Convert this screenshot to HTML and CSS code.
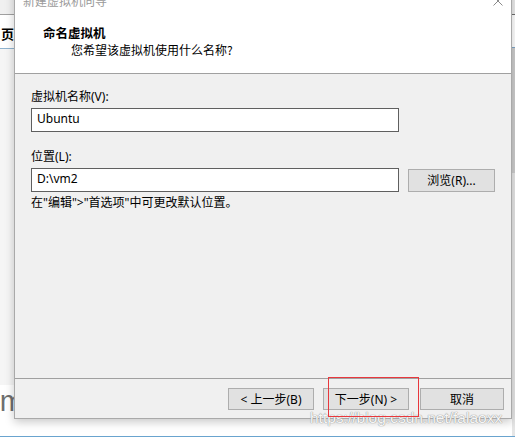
FILE: index.html
```html
<!DOCTYPE html>
<html lang="zh-CN">
<head>
<meta charset="utf-8">
<title>新建虚拟机向导</title>
<link rel="stylesheet" href="styles.css">
</head>
<body>
<div class="screen">
  <div class="desk">
    <div class="side-left">
      <div class="sl-top"></div>
      <div class="sl-tab">页</div>
      <div class="sl-mid"></div>
      <div class="sl-bottom"><span class="sl-m">m</span></div>
    </div>
    <div class="dialog">
      <div class="titlebar">
        <span class="title">新建虚拟机向导</span>
        <svg class="close" width="10" height="10" viewBox="0 0 10 10"><path d="M0.5 0.5L9.5 9.5M9.5 0.5L0.5 9.5"/></svg>
      </div>
      <div class="header">
        <div class="h-title">命名虚拟机</div>
        <div class="h-sub">您希望该虚拟机使用什么名称?</div>
      </div>
      <div class="body">
        <div class="label">虚拟机名称(V):</div>
        <div class="row"><div class="input">Ubuntu</div></div>
        <div class="label label-gap">位置(L):</div>
        <div class="row"><div class="input">D:\vm2</div><div class="btn browse">浏览(R)...</div></div>
        <div class="note">在"编辑"&gt;"首选项"中可更改默认位置。</div>
      </div>
      <div class="footer">
        <div class="btn back">&lt; 上一步(B)</div>
        <div class="btn next">下一步(N) &gt;</div>
        <div class="btn cancel">取消</div>
      </div>
    </div>
    <div class="side-right">
      <div class="sr-top"></div>
      <div class="sr-mid"></div>
      <div class="sr-low"></div>
    </div>
  </div>
  <div class="blue-line"></div>
  <div class="watermark">https://blog.csdn.net/falaoxx</div>
  <div class="highlight"></div>
</div>
</body>
</html>
```

FILE: styles.css
```css
* { box-sizing: border-box; }

html, body {
  margin: 0;
  padding: 0;
  background: #ffffff;
}

body {
  font-family: "Noto Sans", "Noto Sans CJK SC", sans-serif;
  font-size: 12px;
  color: #000;
}

.screen {
  position: relative;
  width: 515px;
  height: 437px;
  overflow: hidden;
  background: #ffffff;
}

.desk {
  display: flex;
  align-items: flex-start;
  height: 436px;
}

/* background window fragments */
.side-left {
  width: 14px;
  height: 436px;
  display: flex;
  flex-direction: column;
  flex-shrink: 0;
}
.sl-top {
  height: 15px;
  background: #f0f0f0;
  border-bottom: 1px solid #a0a0a0;
}
.sl-tab {
  height: 34px;
  background: #ffffff;
  border-bottom: 1px solid #8fb3cf;
  font-family: "Noto Sans CJK SC", sans-serif;
  font-weight: bold;
  font-size: 13px;
  line-height: 16px;
  padding: 11px 0 0 1px;
  overflow: hidden;
}
.sl-mid {
  height: 336px;
  background: #f5f5f5;
}
.sl-bottom {
  flex: 1;
  background: #ffffff;
  overflow: hidden;
  display: flex;
  justify-content: flex-end;
}
.sl-m {
  font-family: "Liberation Sans", sans-serif;
  font-size: 29px;
  line-height: 30px;
  color: #6e6e6e;
  margin-right: -10px;
  margin-top: 1px;
}

.side-right {
  width: 3px;
  height: 436px;
  display: flex;
  flex-direction: column;
  flex-shrink: 0;
}
.sr-top {
  height: 15px;
  background: #ececec;
  border-bottom: 1px solid #6d6d6d;
}
.sr-mid {
  height: 126px;
  background: #cdcdcd;
  border-top: 1px solid #7fa6c7;
  margin-top: 32px;
}
.sr-low {
  flex: 1;
  background: #e6e6e6;
}

/* dialog */
.dialog {
  width: 498px;
  height: 433px;
  margin-top: -14px;
  flex-shrink: 0;
  display: flex;
  flex-direction: column;
  background: #f0f0f0;
  border: 1px solid #a9a9a9;
  box-shadow: 0 3px 9px rgba(0, 0, 0, 0.22);
  position: relative;
  z-index: 1;
}

.titlebar {
  height: 28px;
  background: #ffffff;
  display: flex;
  align-items: center;
  justify-content: space-between;
  padding: 0 8px 0 8px;
}
.title {
  font-family: "Noto Sans CJK SC", sans-serif;
  font-size: 12px;
  line-height: 16px;
  color: #9a9a9a;
}
.close {
  display: block;
  margin-top: -1px;
}
.close path {
  stroke: #8a8a8a;
  stroke-width: 1;
  fill: none;
}

.header {
  background: #ffffff;
  border-bottom: 1px solid #a0a0a0;
  padding: 10px 0 15px 28px;
}
.h-title {
  font-family: "Noto Sans CJK SC", sans-serif;
  font-weight: bold;
  font-size: 12.5px;
  line-height: 16px;
}
.h-sub {
  font-family: "Noto Sans CJK SC", sans-serif;
  line-height: 16px;
  margin-top: 1px;
  padding-left: 28px;
}

.body {
  flex: 1;
  padding: 15px 0 0 16px;
  display: flex;
  flex-direction: column;
  align-items: flex-start;
}
.label {
  line-height: 16px;
}
.label-gap {
  margin-top: 17px;
}
.row {
  display: flex;
  align-items: center;
  margin-top: 3px;
}
.input {
  width: 368px;
  height: 24px;
  background: #ffffff;
  border: 1px solid #5f5f5f;
  padding: 0 5px;
  line-height: 19px;
}
.note {
  margin-top: 3px;
  line-height: 16px;
}

.btn {
  height: 22px;
  background: #e1e1e1;
  border: 1px solid #adadad;
  text-align: center;
  padding-top: 1px;
  line-height: 19px;
  white-space: nowrap;
}
.browse {
  width: 87px;
  height: 23px;
  margin-left: 9px;
}

.footer {
  border-top: 1px solid #a0a0a0;
  padding: 9px 7px 8px 0;
  display: flex;
  justify-content: flex-end;
}
.back { width: 86px; }
.next { width: 86px; margin-left: 9px; }
.cancel { width: 84px; margin-left: 11px; }

.blue-line {
  height: 1px;
  background: #6aa4cf;
}

/* overlays */
.watermark {
  position: absolute;
  left: 310px;
  top: 409px;
  font-family: "Liberation Sans", sans-serif;
  font-size: 15.5px;
  line-height: 18px;
  color: #f6f6f6;
  text-shadow: 0 0 1px #8f8f8f, 0 0 1px #9f9f9f;
  z-index: 2;
  white-space: nowrap;
}

.highlight {
  position: absolute;
  left: 328px;
  top: 377px;
  width: 91px;
  height: 40px;
  border: 1px solid #e8383d;
  z-index: 3;
}
```
